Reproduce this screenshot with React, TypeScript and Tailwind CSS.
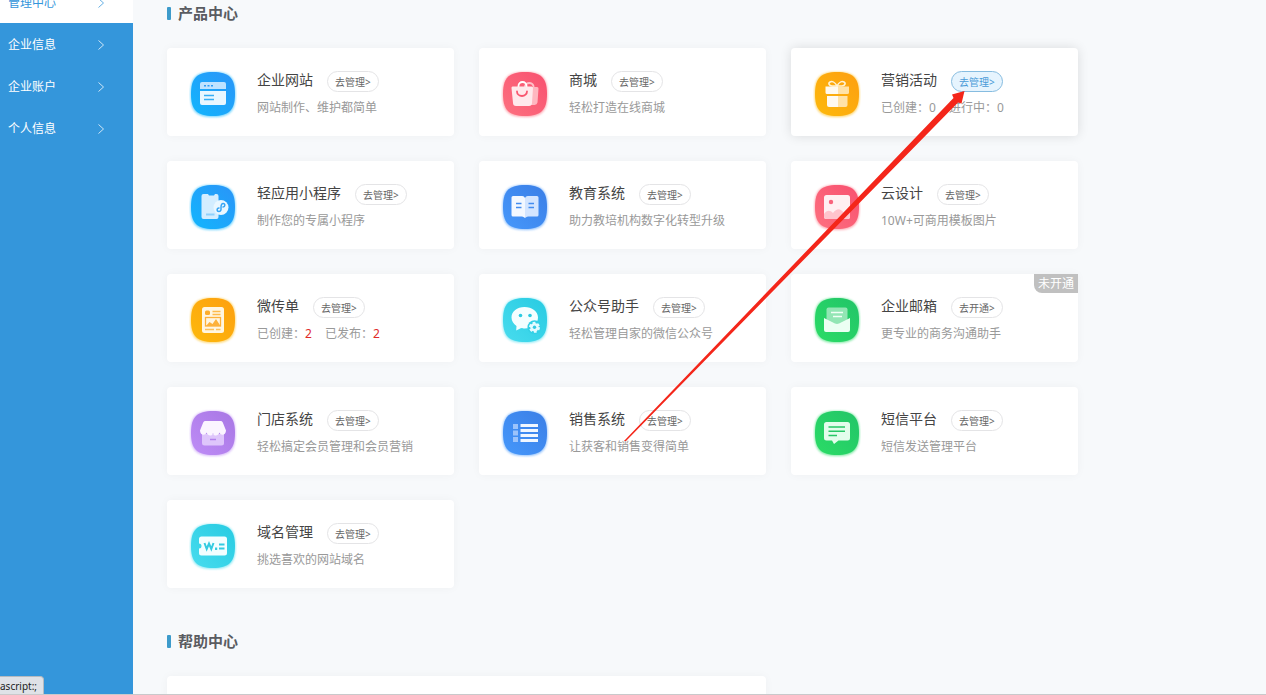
import type { ReactNode } from "react";

type Tone = "azure" | "rose" | "amber" | "blue" | "cyan" | "green" | "violet";

const TONES: Record<Tone, [string, string]> = {
  azure: ["#2a94f8", "#12b6fd"],
  rose: ["#f8506f", "#fd7180"],
  amber: ["#fd9f10", "#fdb90c"],
  blue: ["#3a7ee6", "#4698fb"],
  cyan: ["#27cbe2", "#48dcee"],
  green: ["#22c468", "#2bdc66"],
  violet: ["#a877e4", "#be8cf6"],
};

function Tile({ id, tone, children }: { id: string; tone: Tone; children: ReactNode }) {
  const [from, to] = TONES[tone];
  return (
    <svg viewBox="0 0 48 50" className="mt-[21px] h-[50px] w-12 shrink-0" aria-hidden="true">
      <defs>
        <linearGradient id={id} x1="1" y1="0" x2="0" y2="1">
          <stop offset="0" stopColor={from} />
          <stop offset="1" stopColor={to} />
        </linearGradient>
        <filter id={`${id}-glow`} x="-10%" y="-10%" width="120%" height="120%">
          <feGaussianBlur stdDeviation="1" />
        </filter>
      </defs>
      <path
        d="M24 3C41 3 46.500 8 46.500 25.500S40.500 48 24 48 1.500 43 1.500 25.500 7 3 24 3Z"
        fill={to}
        opacity=".6"
        filter={`url(#${id}-glow)`}
      />
      <path d="M24 3C40 3 46 9 46 25S40 47 24 47 2 41 2 25 8 3 24 3Z" fill={`url(#${id})`} />
      {children}
    </svg>
  );
}

const glyphs: Record<string, ReactNode> = {
  site: (
    <>
      <path d="M13 13h22a2 2 0 0 1 2 2v5H11v-5a2 2 0 0 1 2-2Z" fill="#bfe3ff" />
      <path d="M15 16h2v1.500h-2zM18.500 16h2v1.500h-2zM22 16h2v1.500h-2z" fill="#2f9cf5" />
      <path d="M11 22h26v12a2 2 0 0 1-2 2H13a2 2 0 0 1-2-2Z" fill="#e9f7ff" />
      <path d="M15 26.500h10M15 30.500h10" stroke="#37aef5" strokeWidth="1.500" />
    </>
  ),
  mall: (
    <>
      <path d="M24 18v-1a4.500 4.500 0 0 1 8.500 0v1" fill="none" stroke="#ffc0c8" strokeWidth="1.800" />
      <path d="M26 18h10a1.500 1.500 0 0 1 1.500 1.600l-1 14A3 3 0 0 1 33.500 36H26Z" fill="#ffb7c0" />
      <path d="M17.500 18v-1a4 4 0 0 1 8 0v1" fill="none" stroke="#fff" strokeWidth="1.800" />
      <path d="M11.500 17.500h19a1.500 1.500 0 0 1 1.500 1.600l-1 15a3 3 0 0 1-3 2.900H15a3 3 0 0 1-3-2.900l-1.500-15a1.500 1.500 0 0 1 1-1.600Z" fill="#ffe9ec" />
      <path d="M16 22.500a5 4.500 0 0 0 10 0" fill="none" stroke="#f9566f" strokeWidth="1.800" strokeLinecap="round" />
    </>
  ),
  gift: (
    <>
      <path d="M24 17c-2-4-5-5-7-4s-1 4 2 4h10c3 0 4-3 2-4s-5 0-7 4Z" fill="none" stroke="#fff3d6" strokeWidth="1.600" />
      <path d="M12.500 17.500H25V25H14a1.500 1.500 0 0 1-1.500-1.500Z" fill="#fffaf0" />
      <path d="M25 17.500h11v6a1.500 1.500 0 0 1-1.500 1.500H25Z" fill="#ffe2a8" />
      <path d="M14 27h11v11h-9a2 2 0 0 1-2-2Z" fill="#fffaf0" />
      <path d="M25 27h9.500v9a2 2 0 0 1-2 2H25Z" fill="#ffe2a8" />
    </>
  ),
  mini: (
    <>
      <path d="M14.500 12H19l1 1.500h5l1-1.500h1.500a2 2 0 0 1 2 2v21a2 2 0 0 1-2 2h-13a2 2 0 0 1-2-2V14a2 2 0 0 1 2-2Z" fill="#d3edff" />
      <path d="M17 32.500h8.500" stroke="#8fd0fb" strokeWidth="2" />
      <circle cx="32" cy="25.500" r="7.500" fill="#eaf7ff" />
      <path d="M30 26c-2.500 0-2.500 3.500 0 3.500s2-3 2-4 0-4 2.200-4 2.200 3.500-.2 3.500" fill="none" stroke="#37a5f5" strokeWidth="1.500" strokeLinecap="round" />
    </>
  ),
  book: (
    <>
      <path d="M12 14h9a3 3 0 0 1 3 2v20c-1-1-2-1.500-3-1.500h-9a1.500 1.500 0 0 1-1.500-1.500V15.500A1.500 1.500 0 0 1 12 14Z" fill="#f3f8ff" />
      <path d="M36 14h-9a3 3 0 0 0-3 2v20c1-1 2-1.500 3-1.500h9a1.500 1.500 0 0 0 1.500-1.500V15.500A1.500 1.500 0 0 0 36 14Z" fill="#d3e5ff" />
      <path d="M15 21.500h5.500M15 25.500h5.500M27.500 21.500H33M27.500 25.500H33" stroke="#428cf0" strokeWidth="1.600" />
    </>
  ),
  design: (
    <>
      <rect x="11" y="13" width="26" height="24" rx="2.500" fill="#fff0f2" />
      <circle cx="18" cy="20" r="2.200" fill="#f9637c" />
      <path d="M11 32c3-4 6-4 9-1 4-5 7-5 11 0l6-7v10.500a2.500 2.500 0 0 1-2.500 2.500h-21a2.500 2.500 0 0 1-2.500-2.500Z" fill="#ffc4cc" />
    </>
  ),
  flyer: (
    <>
      <rect x="13" y="12" width="22" height="26" rx="2.500" fill="#fff6e2" />
      <rect x="16" y="15.500" width="5" height="4.500" rx="1.500" fill="#fdad2c" />
      <path d="M23.500 16.500h8M23.500 19.500h8" stroke="#fdba4c" strokeWidth="1.300" />
      <rect x="16.500" y="22.500" width="15" height="8.500" fill="none" stroke="#fdb13a" strokeWidth="1.300" />
      <path d="m17 31 3.500-4 3 2 3.500-5 4.500 7Z" fill="#fdb13a" />
      <path d="M16 34.500h9M27 34.500h4.500" stroke="#fdc25c" strokeWidth="1.300" />
    </>
  ),
  wechat: (
    <>
      <path d="M23.500 12C16 12 10.500 16.500 10.500 22.500c0 3.500 2 6.500 5 8.500l-.3 4.500 5-2.500c1.200.3 2 .4 3.500.4 7.500 0 13.300-4.900 13.300-10.900S31 12 23.500 12Z" fill="#f4feff" />
      <circle cx="19.500" cy="20.500" r="1.800" fill="#2ccbe2" />
      <circle cx="29" cy="20.500" r="1.800" fill="#2ccbe2" />
      <circle cx="33.500" cy="32.300" r="7" fill="#33d0e6" />
      <circle cx="33.500" cy="32.300" r="4.200" fill="#e4fbff" />
      <circle cx="33.500" cy="32.300" r="4.500" fill="none" stroke="#e4fbff" strokeWidth="2" strokeDasharray="2.700 2.012" />
      <circle cx="33.500" cy="32.300" r="1.700" fill="#33c9e2" />
    </>
  ),
  mail: (
    <>
      <rect x="13.500" y="12.500" width="21" height="18" rx="2" fill="#92e6b4" />
      <path d="M18 17.500h12M20 21.500h9" stroke="#f0fff5" strokeWidth="1.600" />
      <path d="m11 23 11 5.500a4.500 4.500 0 0 0 4 0L37 23v12a2 2 0 0 1-2 2H13a2 2 0 0 1-2-2Z" fill="#ecfff3" />
    </>
  ),
  store: (
    <>
      <path d="M13 26h22v9a2.500 2.500 0 0 1-2.500 2.500h-17A2.500 2.500 0 0 1 13 35Z" fill="#dec5fb" />
      <path d="M16.500 13h15a2.500 2.500 0 0 1 2.300 1.400L37 22.500c0 5-5.500 5.500-6.500 2-1.300 4-6 4-6.500.5-.5 3.500-5.200 3.500-6.500-.5-1 3.500-6.500 3-6.500-2l3.200-8.100a2.500 2.500 0 0 1 2.300-1.400Z" fill="#fbf5ff" />
      <path d="M21 31.500h6" stroke="#b380ec" strokeWidth="1.500" />
    </>
  ),
  list: (
    <>
      <path d="M12 16h5v5h-5zM12 22.500h5v5h-5zM12 29h5v5h-5z" fill="#9cc3fb" />
      <path d="M19.500 17.500H37M19.500 22.500H37M19.500 27.500H37M19.500 32.500H37" stroke="#f1f7ff" strokeWidth="3" />
    </>
  ),
  sms: (
    <>
      <path d="M13.500 14h21a2.500 2.500 0 0 1 2.500 2.500V30a2.500 2.500 0 0 1-2.500 2.500h-9L21 36l-2-3.500h-5.500A2.500 2.500 0 0 1 11 30V16.500a2.500 2.500 0 0 1 2.500-2.500Z" fill="#e3fdec" />
      <path d="M15.500 19h16.500M15.500 23.300h16.500M15.500 27.500h8.500" stroke="#27c766" strokeWidth="1.600" />
    </>
  ),
  domain: (
    <>
      <path d="M12.500 15.500h23A2.500 2.500 0 0 1 38 18v14a2.500 2.500 0 0 1-2.500 2.500h-23A2.500 2.500 0 0 1 10 32v-4.500a2.500 2.500 0 0 0 0-5V18a2.500 2.500 0 0 1 2.500-2.500Z" fill="#f2feff" />
      <path d="m15.500 22 2.200 6 2.300-5.500 2.300 5.500 2.200-6" fill="none" stroke="#33cbe1" strokeWidth="2" />
      <path d="M26 26.500h2.200V29H26zM30 22.500h5.500v2H30zM30 26.500h5.500v2H30z" fill="#33cbe1" />
    </>
  ),
};

type Product = {
  id: string;
  tone: Tone;
  name: string;
  desc?: string;
  counts?: [string, number][];
  alert?: boolean;
  action?: string;
  active?: boolean;
  badge?: string;
};

const PRODUCTS: Product[] = [
  { id: "site", tone: "azure", name: "企业网站", desc: "网站制作、维护都简单" },
  { id: "mall", tone: "rose", name: "商城", desc: "轻松打造在线商城" },
  { id: "gift", tone: "amber", name: "营销活动", counts: [["已创建", 0], ["进行中", 0]], active: true },
  { id: "mini", tone: "azure", name: "轻应用小程序", desc: "制作您的专属小程序" },
  { id: "book", tone: "blue", name: "教育系统", desc: "助力教培机构数字化转型升级" },
  { id: "design", tone: "rose", name: "云设计", desc: "10W+可商用模板图片" },
  { id: "flyer", tone: "amber", name: "微传单", counts: [["已创建", 2], ["已发布", 2]], alert: true },
  { id: "wechat", tone: "cyan", name: "公众号助手", desc: "轻松管理自家的微信公众号" },
  { id: "mail", tone: "green", name: "企业邮箱", desc: "更专业的商务沟通助手", action: "去开通>", badge: "未开通" },
  { id: "store", tone: "violet", name: "门店系统", desc: "轻松搞定会员管理和会员营销" },
  { id: "list", tone: "blue", name: "销售系统", desc: "让获客和销售变得简单" },
  { id: "sms", tone: "green", name: "短信平台", desc: "短信发送管理平台" },
  { id: "domain", tone: "cyan", name: "域名管理", desc: "挑选喜欢的网站域名" },
];

function ProductCard({ product: p }: { product: Product }) {
  return (
    <article
      className={`relative flex h-22 items-start rounded-sm bg-white pl-[22px] ${
        p.active ? "shadow-[0_0_12px_rgba(0,0,0,0.12)]" : "shadow-[0_0_10px_rgba(0,0,0,0.04)]"
      }`}
    >
      <Tile id={p.id} tone={p.tone}>
        {glyphs[p.id]}
      </Tile>
      <div className="ml-5 pt-[23px]">
        <div className="flex items-start gap-[14px]">
          <h3 className="text-sm leading-[18px] text-[#444]">{p.name}</h3>
          <button
            type="button"
            aria-label={`${p.name} ${p.action ?? "去管理>"}`}
            className={`h-[21px] rounded-full border px-[7px] text-[10px] leading-4 ${
              p.active ? "border-[#86bce0] bg-[#e6f4fe] text-[#4a9bd8]" : "border-[#e4e4e6] bg-white text-[#666]"
            }`}
          >
            {p.action ?? "去管理>"}
          </button>
        </div>
        <p className="mt-2 flex gap-[13px] text-xs leading-4 text-[#999]">
          {p.desc}
          {p.counts?.map(([label, n]) => (
            <span key={label}>
              {label}：<span className={p.alert ? "text-[#e02a2a]" : ""}>{n}</span>
            </span>
          ))}
        </p>
      </div>
      {p.badge && (
        <span className="absolute top-0 right-0 h-[19px] rounded-bl-lg bg-[#c0c0c0] px-1 text-xs leading-[19px] text-white">
          {p.badge}
        </span>
      )}
    </article>
  );
}

function SectionTitle({ children }: { children: ReactNode }) {
  return (
    <h2 className="flex h-[26px] items-center gap-[7px] text-[15px] leading-[26px] font-bold text-[#5a5c61]">
      <span className="h-[13px] w-1 rounded-[1px] bg-[#3d9bcb]" />
      {children}
    </h2>
  );
}

const NAV = ["管理中心", "企业信息", "企业账户", "个人信息"];

export default function App() {
  return (
    <div className="relative flex h-screen overflow-hidden border-b border-[#c9c9cb] bg-[#f7f9fb] font-['Noto_Sans','Noto_Sans_CJK_SC',sans-serif]">
      <nav className="w-[133px] shrink-0 bg-[#3496db]">
        <ul className="-mt-[19px]">
          {NAV.map((label, i) => (
            <li key={label}>
              <a
                href="#"
                className={`flex h-[42px] items-center justify-between pt-0.5 pr-7 pl-2 text-xs ${
                  i === 0 ? "bg-white text-[#3496db]" : "text-white"
                }`}
              >
                {label}
                <svg viewBox="0 0 8 12" className="h-3 w-2" fill="none" stroke="currentColor" strokeOpacity=".75" aria-hidden="true">
                  <path d="m1.500 1.500 5 4.500-5 4.500" />
                </svg>
              </a>
            </li>
          ))}
        </ul>
      </nav>

      <main className="min-w-0 flex-1 pl-[34px]">
        <div className="max-w-[911px]">
          <section>
            <SectionTitle>产品中心</SectionTitle>
            <div className="mt-[22px] grid grid-cols-3 gap-[25px]">
              {PRODUCTS.map((p) => (
                <ProductCard key={p.id} product={p} />
              ))}
            </div>
          </section>
          <section className="mt-10">
            <SectionTitle>帮助中心</SectionTitle>
            <div className="mt-[22px] grid grid-cols-3 gap-[25px]">
              <div className="col-span-2 h-40 rounded-sm bg-white shadow-[0_0_10px_rgba(0,0,0,0.04)]" />
            </div>
          </section>
        </div>
      </main>

      <svg
        width="360"
        height="370"
        viewBox="0 0 360 370"
        className="pointer-events-none absolute top-20 left-[620px]"
        aria-hidden="true"
      >
        <path d="M4 361 333.500 18l-1.500-3.500 12.500-3.500-3 12.500-3.500-1L6 361Z" fill="#f4261a" />
      </svg>

      <div className="absolute bottom-0 left-0 h-[18px] rounded-tr-sm border-t border-r border-[#b5bac0] bg-[#dfe2e7] pr-1.5 text-[10px] leading-[18px] text-[#222]">
        ascript:;
      </div>
    </div>
  );
}
